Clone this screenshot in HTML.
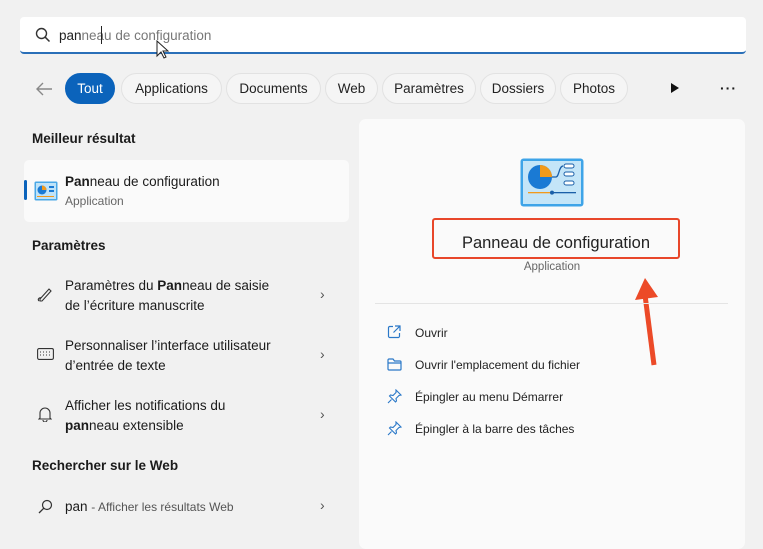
<!DOCTYPE html>
<html><head><meta charset="utf-8"><style>
*{margin:0;padding:0;box-sizing:border-box}
body{width:763px;height:539px;background:#f1f1f1;font-family:"Liberation Sans",sans-serif;color:#1b1b1b;position:relative;overflow:hidden;font-size:13px}
.a{position:absolute}
.search{left:20px;top:17px;width:726px;height:37px;background:#fff;border-radius:4px;border-bottom:2px solid #2a6fb8}
.chip{position:absolute;top:73px;height:31px;border:1px solid #e2e2e2;border-radius:16px;background:#f5f5f5;font-size:13.5px;line-height:29px;text-align:center;color:#222}
.h{font-weight:bold;font-size:13.5px}
.t{font-size:13.5px;line-height:20px}
.chev{position:absolute;left:320px;font-size:14px;color:#555}
.act{position:absolute;left:415px;font-size:12px;color:#222}
</style></head><body>
<div class="a search">
<svg class="a" style="left:15px;top:10px" width="16" height="16" viewBox="0 0 16 16"><circle cx="6.5" cy="6.5" r="5" fill="none" stroke="#333" stroke-width="1.4"/><line x1="10.2" y1="10.2" x2="14.5" y2="14.5" stroke="#333" stroke-width="1.5"/></svg>
<div class="a" style="left:39px;top:11px;font-size:13.5px;color:#777"><span style="color:#222">pan</span>neau de configuration</div>
<div class="a" style="left:81px;top:9px;width:1px;height:18px;background:#222"></div>
</div>
<svg class="a" style="left:34px;top:81px" width="20" height="16" viewBox="0 0 20 16"><path d="M18 8H3M9 2L3 8l6 6" fill="none" stroke="#888" stroke-width="1.4"/></svg>
<div class="chip" style="left:65px;width:50px;background:#0b63bb;border-color:#0b63bb;color:#fff">Tout</div>
<div class="chip" style="left:121px;width:101px">Applications</div>
<div class="chip" style="left:226px;width:95px">Documents</div>
<div class="chip" style="left:325px;width:53px">Web</div>
<div class="chip" style="left:382px;width:94px">Paramètres</div>
<div class="chip" style="left:480px;width:76px">Dossiers</div>
<div class="chip" style="left:560px;width:68px">Photos</div>
<svg class="a" style="left:670px;top:82px" width="10" height="12"><path d="M1 1L9 6L1 11Z" fill="#111"/></svg>
<div class="a" style="left:720px;top:80px;font-size:14px;letter-spacing:1px;font-weight:bold">···</div>

<div class="a h" style="left:32px;top:131px">Meilleur résultat</div>
<div class="a" style="left:24px;top:160px;width:325px;height:62px;background:#fafafa;border-radius:5px"></div>
<div class="a" style="left:24px;top:180px;width:3px;height:20px;background:#0b63bb;border-radius:2px"></div>
<svg class="a" style="left:34px;top:181px" width="24" height="20" viewBox="0 0 24 20"><rect x="0.5" y="0.5" width="23" height="19" rx="1.5" fill="#4aa8e6"/><rect x="2" y="2" width="20" height="16" fill="#bfe3f8"/><circle cx="8" cy="9" r="4.5" fill="#1a7ad4"/><path d="M8 9V4.5A4.5 4.5 0 0 1 12.5 9Z" fill="#f29a1b"/><rect x="15" y="5" width="5" height="2" fill="#1a7ad4"/><rect x="15" y="9" width="5" height="2" fill="#1a7ad4"/><rect x="3" y="15" width="17" height="1" fill="#f29a1b"/></svg>
<div class="a t" style="left:65px;top:172px;font-size:13.5px"><b>Pan</b>neau de configuration</div>
<div class="a" style="left:65px;top:194px;font-size:12px;color:#666">Application</div>

<div class="a h" style="left:32px;top:238px">Paramètres</div>
<svg class="a" style="left:37px;top:286px" width="16" height="16" viewBox="0 0 16 16"><path d="M3 13L12 3l2 2-9 10H3z M2 15c-2-2 1-4 2-3" fill="none" stroke="#333" stroke-width="1.1"/></svg>
<div class="a t" style="left:65px;top:276px">Paramètres du <b>Pan</b>neau de saisie<br>de l’écriture manuscrite</div>
<div class="chev" style="top:286px">›</div>
<svg class="a" style="left:37px;top:348px" width="17" height="12" viewBox="0 0 17 12"><rect x="0.6" y="0.6" width="15.8" height="10.8" rx="1.5" fill="none" stroke="#333" stroke-width="1.1"/><path d="M3 4h1M6 4h1M9 4h1M12 4h1M3 7h1M6 7h1M9 7h1M12 7h1" stroke="#333"/></svg>
<div class="a t" style="left:65px;top:336px">Personnaliser l’interface utilisateur<br>d’entrée de texte</div>
<div class="chev" style="top:346px">›</div>
<svg class="a" style="left:38px;top:406px" width="14" height="16" viewBox="0 0 14 16"><path d="M2 12V7a5 5 0 0 1 10 0v5l1 1H1z M5 14a2 2 0 0 0 4 0" fill="none" stroke="#333" stroke-width="1.1"/></svg>
<div class="a t" style="left:65px;top:396px">Afficher les notifications du<br><b>pan</b>neau extensible</div>
<div class="chev" style="top:406px">›</div>
<div class="a h" style="left:32px;top:458px">Rechercher sur le Web</div>
<svg class="a" style="left:38px;top:499px" width="15" height="15" viewBox="0 0 15 15"><circle cx="9" cy="6" r="4.5" fill="none" stroke="#333" stroke-width="1.2"/><line x1="5.8" y1="9.2" x2="1" y2="14" stroke="#333" stroke-width="1.3"/></svg>
<div class="a" style="left:65px;top:499px;font-size:13.5px">pan <span style="font-size:12px;color:#555">- Afficher les résultats Web</span></div>
<div class="chev" style="top:497px">›</div>

<div class="a" style="left:359px;top:119px;width:386px;height:430px;background:#fafafa;border-radius:7px"></div>
<svg class="a" style="left:520px;top:158px" width="64" height="49" viewBox="0 0 64 49"><rect x="0.5" y="0.5" width="63" height="48" rx="3" fill="#3ea4e8"/><rect x="3" y="3" width="58" height="43" fill="#c4e5f8"/><circle cx="20" cy="19" r="12" fill="#1a7ad4"/><path d="M20 19V7A12 12 0 0 1 32 19Z" fill="#f29a1b"/><path d="M32 19h4c3 0 3-11 7-11" fill="none" stroke="#1a5fa8" stroke-width="1.3"/><rect x="44" y="6" width="10" height="4" rx="2" fill="#fff" stroke="#1a5fa8"/><rect x="44" y="14" width="10" height="4" rx="2" fill="#fff" stroke="#1a5fa8"/><rect x="44" y="23" width="10" height="4" rx="2" fill="#fff" stroke="#1a5fa8"/><rect x="8" y="34" width="24" height="1.3" fill="#f29a1b"/><rect x="32" y="34" width="24" height="1.3" fill="#1a5fa8"/><circle cx="32" cy="34.6" r="2" fill="#1a5fa8"/></svg>
<div class="a" style="left:432px;top:218px;width:248px;height:41px;border:2px solid #e8472a;border-radius:3px"></div>
<div class="a" style="left:432px;top:234px;width:248px;text-align:center;font-size:16.5px;color:#222">Panneau de configuration</div>
<div class="a" style="left:359px;top:261px;width:386px;text-align:center;font-size:11.5px;color:#666">Application</div>
<svg class="a" style="left:630px;top:270px" width="40" height="100" viewBox="0 0 40 100"><path d="M24 95L15 25" stroke="#ec4a28" stroke-width="5"/><path d="M5 30L15 8L28 27Z" fill="#ec4a28"/></svg>
<div class="a" style="left:375px;top:303px;width:353px;height:1px;background:#e4e4e4"></div>
<svg class="a" style="left:387px;top:325px" width="14" height="14" viewBox="0 0 14 14"><path d="M6 1.5H2.5a1.5 1.5 0 0 0-1 1v9a1.5 1.5 0 0 0 1 1h9a1.5 1.5 0 0 0 1-1V8M8 1h5v5M13 1L6.5 7.5" fill="none" stroke="#2a78c8" stroke-width="1.2"/></svg>
<div class="act" style="top:326px">Ouvrir</div>
<svg class="a" style="left:387px;top:358px" width="15" height="13" viewBox="0 0 15 13"><path d="M1 2a1 1 0 0 1 1-1h4l1.5 2H13a1 1 0 0 1 1 1v7a1 1 0 0 1-1 1H2a1 1 0 0 1-1-1zM1 5h13" fill="none" stroke="#2a78c8" stroke-width="1.2"/></svg>
<div class="act" style="top:358px">Ouvrir l'emplacement du fichier</div>
<svg class="a" style="left:387px;top:389px" width="15" height="15" viewBox="0 0 15 15"><path d="M9 1l5 5-2 .5-3 3 .5 2.5-1 1-6-6 1-1 2.5.5 3-3z M4.5 10.5L1 14" fill="none" stroke="#2a78c8" stroke-width="1.1"/></svg>
<div class="act" style="top:390px">Épingler au menu Démarrer</div>
<svg class="a" style="left:387px;top:421px" width="15" height="15" viewBox="0 0 15 15"><path d="M9 1l5 5-2 .5-3 3 .5 2.5-1 1-6-6 1-1 2.5.5 3-3z M4.5 10.5L1 14" fill="none" stroke="#2a78c8" stroke-width="1.1"/></svg>
<div class="act" style="top:422px">Épingler à la barre des tâches</div>
<svg class="a" style="left:156px;top:40px" width="14" height="20" viewBox="0 0 14 20"><path d="M1 1v15l4-4 3 6 2-1-3-6h5z" fill="#fff" stroke="#222" stroke-width="1"/></svg>
</body></html>
